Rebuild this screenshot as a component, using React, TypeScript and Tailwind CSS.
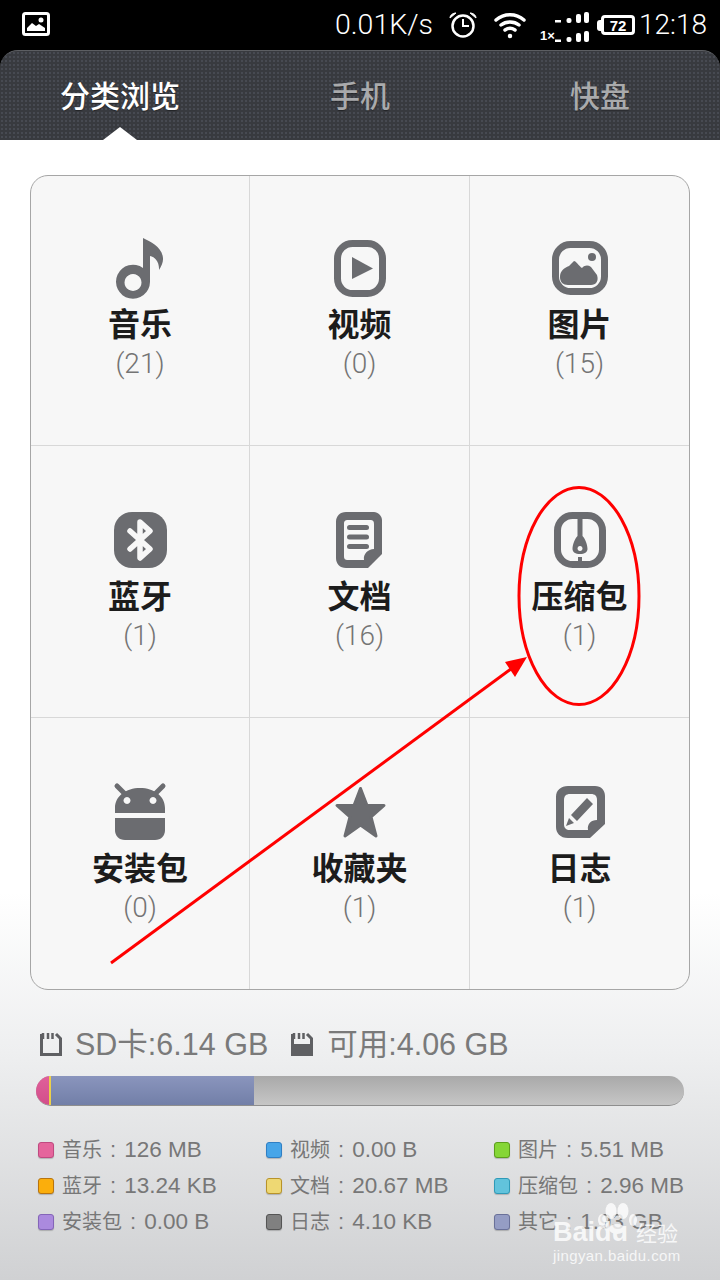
const ICON = "#6b6c70";

function NoteIcon() {
  return (
    <svg width="60" height="62" viewBox="0 0 60 62">
      <path fill={ICON} fillRule="evenodd" d="M33 1c8 4 19 9 20 20 .3 4-1.500 8-4 12 .5-8-4-13-9-14v26a17 17 0 1 1-7-14zM23 37a8.500 8.500 0 1 0 .01 0z" />
    </svg>
  );
}

function VideoIcon() {
  return (
    <svg width="60" height="62" viewBox="0 0 60 62">
      <rect x="7.500" y="6.500" width="45" height="50" rx="15" fill="none" stroke={ICON} strokeWidth="7" />
      <path fill={ICON} d="M22 20l21 11.500L22 42z" />
    </svg>
  );
}

function PictureIcon() {
  return (
    <svg width="60" height="62" viewBox="0 0 60 62">
      <rect x="5.500" y="7.500" width="49" height="47" rx="15" fill="none" stroke={ICON} strokeWidth="7" />
      <circle cx="42" cy="20" r="4" fill={ICON} />
      <path fill={ICON} d="M10 40c0-6 4-9 9-11l5-5c2 0 5 5 8 7 3-3 6-3 9-1l6 8c2 6-1 10-6 10H18c-5 0-8-3-8-8z" />
    </svg>
  );
}

function BluetoothIcon() {
  return (
    <svg width="60" height="60" viewBox="0 0 60 60">
      <rect x="4" y="2" width="53" height="56" rx="18" fill={ICON} />
      <path fill="none" stroke="#f7f7f7" strokeWidth="5.500" strokeLinecap="round" strokeLinejoin="round" d="M20 21l20 18-10 9V12l10 9-20 18" />
    </svg>
  );
}

function DocIcon() {
  return (
    <svg width="60" height="60" viewBox="0 0 60 60">
      <path fill={ICON} fillRule="evenodd" d="M16 2h28c4 0 8 4 8 8v34L38 58H16c-6 0-10-4-10-10V12C6 6 10 2 16 2zm2 8c-3 0-4 1-4 4v32c0 3 1 4 4 4h16c-1-6 4-11 10-11V14c0-3-1-4-4-4z" />
      <rect x="17" y="15" width="22" height="5" rx="2.500" fill={ICON} />
      <rect x="17" y="24.500" width="22" height="5" rx="2.500" fill={ICON} />
      <rect x="17" y="34" width="22" height="5" rx="2.500" fill={ICON} />
    </svg>
  );
}

function ZipIcon() {
  return (
    <svg width="60" height="60" viewBox="0 0 60 60">
      <rect x="7.500" y="5.500" width="45" height="49" rx="15" fill="none" stroke={ICON} strokeWidth="7" />
      <path fill={ICON} fillRule="evenodd" d="M27.500 6h5v20c3 3 5 9 5 13 0 3-3 5-7.500 5s-7.500-2-7.500-5c0-4 2-10 5-13zm2.500 30a2.500 2.500 0 1 0 .01 0z" />
      <rect x="28" y="47" width="4" height="6" fill={ICON} />
    </svg>
  );
}

function AndroidIcon() {
  return (
    <svg width="60" height="60" viewBox="0 0 60 60">
      <path stroke={ICON} strokeWidth="5" strokeLinecap="round" d="M7 4l8 8M53 4l-8 8" />
      <path fill={ICON} fillRule="evenodd" d="M5 31V26C5 14 16 6 30 6s25 8 25 20v5zM17 15a3.500 3.500 0 1 0 .01 0zM43 15a3.500 3.500 0 1 0 .01 0z" />
      <path fill={ICON} d="M5 36h50v12c0 6-4 10-10 10H15C9 58 5 54 5 48z" />
    </svg>
  );
}

function StarIcon() {
  return (
    <svg width="60" height="60" viewBox="0 0 60 60">
      <path fill={ICON} stroke={ICON} strokeWidth="3" strokeLinejoin="round" d="M30.500 6.500l6.500 17h17L41 35l5 19-15.500-11L15 54l5-19L7 23.500h17z" />
    </svg>
  );
}

function LogIcon() {
  return (
    <svg width="60" height="60" viewBox="0 0 60 60">
      <path fill={ICON} fillRule="evenodd" d="M18 4h27c6 0 10 4 10 10v28L40 56H18C10 56 6 51 6 45V15C6 8 11 4 18 4zm2 8c-4 0-6 2-6 6v24c0 4 2 6 6 6h18c-1-6 3-10 9-10V18c0-4-2-6-6-6z" />
      <path fill={ICON} d="M37 16l6 6-16 17-6-6zM19 36l5 5-8 3z" />
    </svg>
  );
}

function Cell({ icon, name, count, pad, border }: { icon: React.ReactNode; name: string; count: string; pad: string; border: string }) {
  return (
    <div className={`flex flex-col items-center ${pad} ${border}`}>
      <div className="flex h-[60px] w-[60px] items-center justify-center">{icon}</div>
      <div className="font-['Noto_Sans_CJK_SC',sans-serif] text-[32px] leading-[48px] font-bold text-[#1c1c1c]">{name}</div>
      <div className="mt-[4px] font-['Roboto',sans-serif] text-[28px] leading-[28px] font-light text-[#747474]">{count}</div>
    </div>
  );
}

function Legend({ swatch, label, value }: { swatch: string; label: string; value: string }) {
  return (
    <div className="flex h-9 items-center">
      <span className={`h-4 w-4 rounded-[3px] border shadow-[0_1px_1px_rgba(0,0,0,0.2)] ${swatch}`} />
      <span className="ml-2 flex items-baseline font-['Liberation_Sans','Noto_Sans_CJK_SC',sans-serif] whitespace-nowrap text-[#777]">
        <span className="text-[20px]">{label}</span>
        <span className="mx-[8px] text-[22px]">:</span>
        <span className="text-[22.500px]">{value}</span>
      </span>
    </div>
  );
}

function StatusBar() {
  return (
    <div className="flex h-[50px] items-center bg-black pr-[13px] pl-[22px] text-white">
      <svg width="29" height="24" viewBox="0 0 29 24" className="mb-[2px]">
        <rect x="1.500" y="1.500" width="25" height="21" rx="2" fill="none" stroke="#fff" strokeWidth="3" />
        <path fill="#fff" d="M5 19v-3l5-5 4 3 3-2 6 4v3z" />
        <circle cx="19" cy="8" r="2.500" fill="#fff" />
      </svg>
      <div className="ml-auto font-['Roboto',sans-serif] text-[28.500px] leading-none font-light">0.01K/s</div>
      <svg width="30" height="28" viewBox="0 0 30 28" className="ml-[15px]" fill="none" stroke="#fff">
        <circle cx="15" cy="15" r="10.500" strokeWidth="2.500" />
        <path strokeWidth="2" d="M15 8v7h6" />
        <path fill="#fff" strokeWidth="1" d="M2 7c0-3 3-5 6-5zM28 7c0-3-3-5-6-5z" />
      </svg>
      <svg width="34" height="28" viewBox="0 0 34 28" className="ml-[15px]" fill="none" stroke="#fff" strokeWidth="3.500" strokeLinecap="round">
        <path d="M3 9c8-7 20-7 28 0M8 14c5-4 13-4 18 0M12 19c3-2 7-2 10 0" />
        <circle cx="17" cy="25" r="1.500" fill="#fff" strokeWidth="1.500" />
      </svg>
      <div className="relative ml-[13px] h-[36px] w-[52px]">
        <svg width="52" height="36" viewBox="0 0 52 36" fill="#fff">
          <rect x="15" y="13" width="6" height="2.500" />
          <rect x="26.500" y="11" width="5" height="5" rx="2" />
          <rect x="36" y="7" width="5" height="9" rx="2" />
          <rect x="44" y="5" width="5" height="11" rx="2" />
          <rect x="15" y="32.500" width="6" height="2.500" />
          <rect x="26.500" y="30" width="5" height="5" rx="2" />
          <rect x="36" y="26" width="5" height="9" rx="2" />
          <rect x="44" y="24" width="5" height="11" rx="2" />
        </svg>
        <span className="absolute top-[22px] left-0 font-['Liberation_Sans',sans-serif] text-[13px] leading-[14px] font-bold">1×</span>
      </div>
      <div className="ml-[5px] flex items-center">
        <span className="h-[11px] w-[4px] rounded-l-[3px] bg-white" />
        <span className="flex h-[20px] w-[34px] items-center justify-center rounded-[4px] border-[3px] border-white font-['Liberation_Sans',sans-serif] text-[15px] leading-none font-bold">72</span>
      </div>
      <div className="ml-[4px] font-['Roboto',sans-serif] text-[28px] leading-none font-light">12:18</div>
    </div>
  );
}

function Tabs() {
  return (
    <div className="relative flex h-[90px] rounded-t-[18px] border-t border-[#5c5e62] bg-[#383a3f] bg-[radial-gradient(#474a52_1.4px,transparent_1.5px)] bg-[size:4px_4px] font-['Noto_Sans_CJK_SC',sans-serif] text-[30px] font-medium [text-shadow:0_1px_1px_rgba(0,0,0,0.4)]">
      <div className="flex w-[240px] items-center justify-center pb-[2px] text-white">分类浏览</div>
      <div className="flex w-[240px] items-center justify-center pb-[2px] text-[#a9aaac]">手机</div>
      <div className="flex w-[240px] items-center justify-center pb-[2px] text-[#a9aaac]">快盘</div>
      <div className="absolute bottom-0 left-[103px] h-0 w-0 border-x-[17px] border-b-[13px] border-x-transparent border-b-white" />
    </div>
  );
}

export default function App() {
  return (
    <div className="relative flex h-[1280px] w-[720px] flex-col overflow-hidden bg-black">
      <StatusBar />
      <Tabs />
      <div className="flex flex-1 flex-col bg-[linear-gradient(#fff_0%,#fff_66%,#eeeff0_80%,#d0d1d3_100%)] px-[30px] pt-[35px]">
        <div className="grid h-[815px] grid-cols-[219px_220px_1fr] grid-rows-[270px_272px_1fr] rounded-[18px] border border-[#a6a6a6] bg-[#f7f7f7]">
          <Cell icon={<NoteIcon />} name="音乐" count="(21)" pad="pt-[62px]" border="border-r border-b border-[#d8d8d8]" />
          <Cell icon={<VideoIcon />} name="视频" count="(0)" pad="pt-[62px]" border="border-r border-b border-[#d8d8d8]" />
          <Cell icon={<PictureIcon />} name="图片" count="(15)" pad="pt-[62px]" border="border-b border-[#d8d8d8]" />
          <Cell icon={<BluetoothIcon />} name="蓝牙" count="(1)" pad="pt-[64px]" border="border-r border-b border-[#d8d8d8]" />
          <Cell icon={<DocIcon />} name="文档" count="(16)" pad="pt-[64px]" border="border-r border-b border-[#d8d8d8]" />
          <Cell icon={<ZipIcon />} name="压缩包" count="(1)" pad="pt-[64px]" border="border-b border-[#d8d8d8]" />
          <Cell icon={<AndroidIcon />} name="安装包" count="(0)" pad="pt-[64px]" border="border-r border-[#d8d8d8]" />
          <Cell icon={<StarIcon />} name="收藏夹" count="(1)" pad="pt-[64px]" border="border-r border-[#d8d8d8]" />
          <Cell icon={<LogIcon />} name="日志" count="(1)" pad="pt-[64px]" border="" />
        </div>

        <div className="mt-[36px] flex h-[36px] items-center pl-[10px] font-['Liberation_Sans','Noto_Sans_CJK_SC',sans-serif] text-[30.500px] text-[#7a7a7a]">
          <svg width="22" height="24" viewBox="0 0 22 24" fill="none" stroke="#5f6063">
            <path strokeWidth="3" d="M1.500 2v20.500h19V6.500L16 2" />
            <path strokeWidth="2.500" d="M3 1v6M8 1v6M12.500 1v6" />
          </svg>
          <span className="ml-[13px] pt-[2px]">SD卡:6.14 GB</span>
          <svg width="22" height="24" viewBox="0 0 22 24" fill="none" stroke="#5f6063" className="ml-[23px]">
            <path strokeWidth="3" d="M1.500 2v20.500h19V6.500L16 2" />
            <path strokeWidth="2.500" d="M3 1v6M8 1v6M12.500 1v6" />
            <rect x="3" y="12" width="16" height="9" fill="#5f6063" stroke="none" />
          </svg>
          <span className="ml-[14px] pt-[2px]">可用:4.06 GB</span>
        </div>

        <div className="mx-[6px] mt-[14px] flex h-[30px] overflow-hidden rounded-full border-b border-[#8e8e8e] bg-[linear-gradient(#a9a9a9,#c6c6c6)]">
          <div className="w-[13px] bg-[linear-gradient(#e0609a,#d24e8a)]" />
          <div className="w-[2px] bg-[#ecd04a]" />
          <div className="w-[203px] bg-[linear-gradient(#8a95bd,#727fa8)]" />
        </div>

        <div className="mt-[26px] ml-[8px] grid grid-cols-[228px_228px_1fr]">
          <Legend swatch="border-[#c04a80] bg-[#e5659c]" label="音乐" value="126 MB" />
          <Legend swatch="border-[#2f7fc4] bg-[#47a5e8]" label="视频" value="0.00 B" />
          <Legend swatch="border-[#5c9e1c] bg-[#85d636]" label="图片" value="5.51 MB" />
          <Legend swatch="border-[#b8740f] bg-[#fbae0c]" label="蓝牙" value="13.24 KB" />
          <Legend swatch="border-[#b8932a] bg-[#eed873]" label="文档" value="20.67 MB" />
          <Legend swatch="border-[#2f9ab8] bg-[#62c3dc]" label="压缩包" value="2.96 MB" />
          <Legend swatch="border-[#8465b8] bg-[#ab8ade]" label="安装包" value="0.00 B" />
          <Legend swatch="border-[#555] bg-[#808080]" label="日志" value="4.10 KB" />
          <Legend swatch="border-[#6a7199] bg-[#959dc4]" label="其它" value="1.93 GB" />
        </div>
      </div>

      {/* red annotation drawn over the screenshot */}
      <svg className="pointer-events-none absolute inset-0" width="720" height="1280" viewBox="0 0 720 1280" fill="none">
        <ellipse cx="579" cy="596" rx="60" ry="108.500" stroke="#ff0000" strokeWidth="3" />
        <path stroke="#ff0000" strokeWidth="3" d="M111 963L515 666" />
        <path fill="#ff0000" d="M527 657l-22 5 10 15z" />
      </svg>

      {/* baidu watermark */}
      <div className="pointer-events-none absolute top-[1200px] left-[553px] w-[130px] text-white opacity-80">
        <svg width="44" height="34" viewBox="0 0 44 34" fill="#fff" className="absolute top-0 left-[44px]">
          <ellipse cx="5" cy="20" rx="4" ry="6" />
          <ellipse cx="14" cy="11" rx="5.500" ry="8" />
          <ellipse cx="26" cy="11" rx="5.500" ry="8" />
          <ellipse cx="36" cy="20" rx="4" ry="6" />
          <ellipse cx="20" cy="29" rx="8" ry="5" />
        </svg>
        <div className="flex h-[46px] items-end font-['Liberation_Sans',sans-serif] text-[27px] leading-[28px] font-bold">
          <span>Baidu</span>
          <span className="ml-[8px] font-['Noto_Sans_CJK_SC',sans-serif] text-[21px] leading-[28px] font-normal">经验</span>
        </div>
        <div className="font-['Liberation_Sans',sans-serif] text-[15px] leading-[20px] tracking-[0.4px] whitespace-nowrap">jingyan.baidu.com</div>
      </div>
    </div>
  );
}
